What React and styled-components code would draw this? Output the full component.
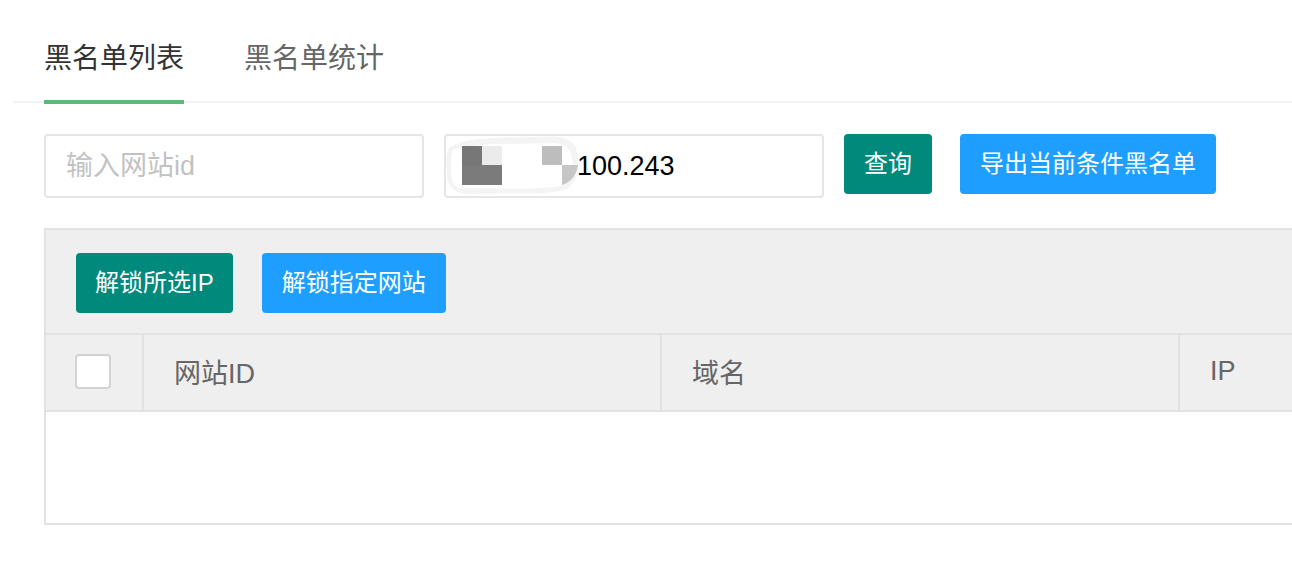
import React from "react";
import styled, { createGlobalStyle } from "styled-components";

const Global = createGlobalStyle`
  html, body { margin: 0; padding: 0; background: #fff; overflow: hidden; }
  body { font-family: "Liberation Sans", "Noto Sans CJK SC", sans-serif; }
  * { box-sizing: border-box; }
`;

const Page = styled.div`
  width: 1292px;
  height: 568px;
  overflow: hidden;
`;

const TabBar = styled.div`
  margin-left: 14px;
  height: 103px;
  border-bottom: 2px solid #f2f2f2;
  display: flex;
  align-items: flex-start;
  padding-left: 30px;
  gap: 60px;
`;

const TabItem = styled.div`
  width: 140px;
  height: 104px;
  padding-top: 39px;
  line-height: 40px;
  font-size: 28px;
  text-align: center;
  white-space: nowrap;
  color: ${(p) => (p.$active ? "#333" : "#666")};
  border-bottom: 4px solid ${(p) => (p.$active ? "#5FB878" : "transparent")};
  cursor: pointer;
`;

const Content = styled.div`
  padding: 31px 0 0 44px;
`;

const SearchRow = styled.div`
  display: flex;
  align-items: flex-start;
  gap: 20px;
`;

const FieldWrap = styled.div`
  position: relative;
  width: 380px;
  height: 64px;
`;

const Input = styled.input`
  width: 100%;
  height: 100%;
  border: 2px solid #e6e6e6;
  border-radius: 4px;
  padding: 0 20px 0 ${(p) => p.$padLeft || 20}px;
  font-family: inherit;
  font-size: 27px;
  color: #000;
  outline: none;
  background: #fff;
  &::placeholder { color: #c2c2c2; }
`;

const Redaction = styled.svg`
  position: absolute;
  left: 1px;
  top: 0;
`;

const Button = styled.button`
  height: 60px;
  border: none;
  border-radius: 4px;
  padding: 0 ${(p) => p.$pad ?? 20}px;
  margin-left: ${(p) => p.$ml || 0}px;
  background: ${(p) => (p.$variant === "blue" ? "#1E9FFF" : "#01897B")};
  color: #fff;
  font-family: inherit;
  font-size: 24px;
  line-height: 60px;
  text-align: center;
  white-space: nowrap;
  cursor: pointer;
  flex-shrink: 0;
`;

const Table = styled.div`
  margin-top: 30px;
  width: 1400px;
  border: 2px solid #e2e2e2;
  background: #fff;
`;

const Toolbar = styled.div`
  display: flex;
  gap: 29px;
  padding: 23px 30px 20px;
  background: #efefef;
  border-bottom: 2px solid #e2e2e2;
`;

const HeaderRow = styled.div`
  display: grid;
  grid-template-columns: 98px 518px 518px 1fr;
  background: #efefef;
  border-bottom: 2px solid #e2e2e2;
`;

const HeadCell = styled.div`
  height: 75px;
  display: flex;
  align-items: center;
  justify-content: ${(p) => (p.$center ? "center" : "flex-start")};
  padding-left: ${(p) => (p.$center ? 0 : 30)}px;
  padding-bottom: 2px;
  font-size: 27px;
  color: #666;
  border-right: 2px solid #e2e2e2;
  &:last-child { border-right: none; }
`;

const Checkbox = styled.span`
  display: block;
  width: 36px;
  height: 35px;
  border: 2px solid #d2d2d2;
  border-radius: 4px;
  background: #fff;
  margin-right: 2px;
`;

const Body = styled.div`
  height: 111px;
  background: #fff;
`;

function RedactionMark() {
  return (
    <Redaction width="134" height="62" viewBox="0 0 134 62" aria-hidden="true">
      <path
        d="M4 14 C20 2 60 4 95 3 C115 1 130 4 132 18 C134 34 133 50 120 56 C95 62 60 58 30 60 C10 61 2 54 2 40 C1 28 0 20 4 14 Z"
        fill="#f4f4f4"
      />
      <path
        d="M8 16 C30 9 70 10 110 9 C124 10 128 20 128 32 C128 44 124 52 110 53 C80 56 40 54 15 54 C7 52 6 44 6 34 C6 24 6 19 8 16 Z"
        fill="#ffffff"
      />
      <rect x="17" y="12" width="20" height="19" fill="#777777" />
      <rect x="37" y="12" width="20" height="19" fill="#ebebeb" />
      <rect x="17" y="31" width="40" height="20" fill="#7b7b7b" />
      <rect x="97" y="12" width="20" height="19" fill="#bdbdbd" />
      <path d="M117 51 L117 31 L133 31 C131 42 126 48 117 51 Z" fill="#c6c6c6" />
    </Redaction>
  );
}

export default function App() {
  return (
    <Page>
      <Global />
      <TabBar>
        <TabItem $active>黑名单列表</TabItem>
        <TabItem>黑名单统计</TabItem>
      </TabBar>
      <Content>
        <SearchRow>
          <FieldWrap>
            <Input placeholder="输入网站id" />
          </FieldWrap>
          <FieldWrap>
            <Input $padLeft={131} defaultValue="100.243" readOnly />
            <RedactionMark />
          </FieldWrap>
          <Button $pad={20}>查询</Button>
          <Button $variant="blue" $pad={20} $ml={8}>
            导出当前条件黑名单
          </Button>
        </SearchRow>
        <Table>
          <Toolbar>
            <Button $pad={19}>解锁所选IP</Button>
            <Button $variant="blue" $pad={20}>解锁指定网站</Button>
          </Toolbar>
          <HeaderRow>
            <HeadCell $center>
              <Checkbox />
            </HeadCell>
            <HeadCell>网站ID</HeadCell>
            <HeadCell>域名</HeadCell>
            <HeadCell>IP</HeadCell>
          </HeaderRow>
          <Body />
        </Table>
      </Content>
    </Page>
  );
}
